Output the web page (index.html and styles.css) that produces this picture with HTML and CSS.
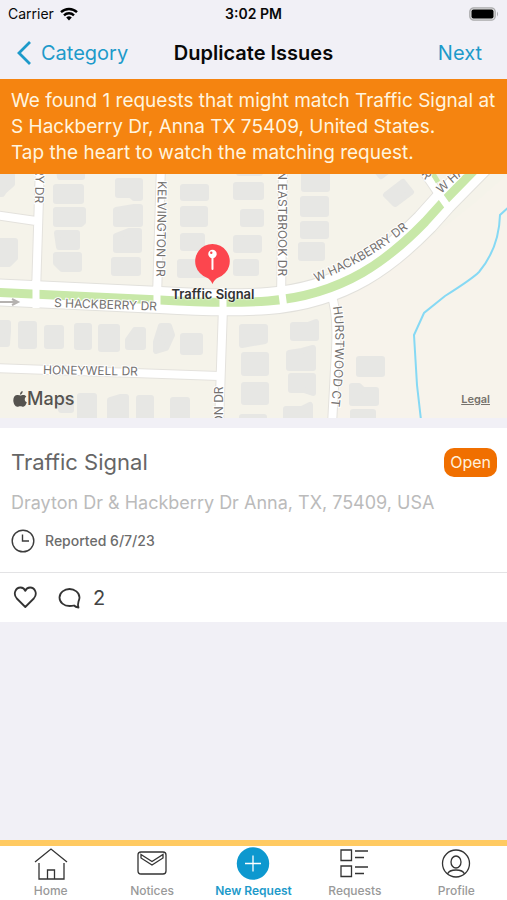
FILE: index.html
```html
<!doctype html>
<html lang="en">
<head>
<meta charset="utf-8" />
<title>Duplicate Issues</title>
<meta name="viewport" content="width=device-width, initial-scale=1" />
<link rel="stylesheet" href="styles.css">
</head>
<body>
  <!-- Status bar -->
  <div class="status">
    <div class="carrier">
      <span>Carrier</span>
      <svg width="18" height="14" viewBox="0 0 18 14" fill="none" stroke="#000" stroke-width="2.4">
        <path d="M1 5.2a11.6 11.6 0 0 1 16 0M4 8.3a7.3 7.3 0 0 1 10 0"/>
        <path d="M9 13.5 6.2 10.6a4 4 0 0 1 5.6 0z" fill="#000" stroke="none"/>
      </svg>
    </div>
    <div class="time">3:02 PM</div>
    <div class="battery">
      <svg width="30" height="14" viewBox="0 0 30 14">
        <rect x=".8" y=".8" width="25.4" height="12.4" rx="4" fill="#dededf" stroke="#aaaaac" stroke-width="1.3"/>
        <rect x="2.5" y="2.4" width="22" height="9.2" rx="2" fill="#000"/>
        <path d="M28 4.5q2 2.5 0 5z" fill="#aaaaac"/>
      </svg>
    </div>
  </div>

  <!-- Navigation -->
  <header class="nav">
    <a class="back" href="#">
      <svg width="14" height="24" viewBox="0 0 14 24" fill="none" stroke="currentColor" stroke-width="2.8"><path d="M13 1 2 12l11 11"/></svg>
      Category
    </a>
    <h1>Duplicate Issues</h1>
    <a class="next" href="#">Next</a>
  </header>

  <p class="banner">We found 1 requests that might match Traffic Signal at S Hackberry Dr, Anna TX 75409, United States.<br>Tap the heart to watch the matching request.</p>

  <!-- Map -->
  <div class="map">
    <svg class="tiles" viewBox="0 174 507 244">
      <defs>
        <path id="main" d="M-10 292 160 300Q225 304 268 301C345 295 390 258 425 222L443 202 500 144"/>
        <path id="side" d="M-5 215 36 221M40 165 36 293M161 165 157 297M283 165 281 299M424 172 443 200M-5 368 219 376M223 307 219 425M331 294Q338 312 336 350L332 425"/>
        <path id="hackberry" d="M316 282Q372 260 412 225"/>
        <path id="hurstwood" d="M333 307Q339 340 330 415"/>
      </defs>
      <path class="land" d="M0 174H507V418H0z"/>
      <path class="land-east" d="M327 418 337 330Q325 298 340 288 420 255 507 174V418z"/>

      <!-- buildings -->
      <g class="houses">
        <path d="M0 175h12v9l-8 7-2 3H0zM0 241h15v17l-6 6H0z"/>
        <path d="M59 170h23v7H60zM56 187h25v14H56zM56 210h27v12l-2 2H56zM57 233h20v14H59zM56 255h23v14H62l-6-6z"/>
        <path d="M118 170h22v1h-22zM118 181h22v17h-6l-3-3h-13zM116 210l18-3h6v17h-24zM116 236l13-5h10v19h-23zM114 260h24v13h-24z"/>
        <path d="M183 187h23v11h-23zM183 209h22v15h-22zM183 236h19v12h-19zM180 262h26v13h-26z"/>
        <path d="M239 170h21v3h-21zM236 185h25v12h-25zM243 212h18v12h-18zM236 238h23v12h-23zM236 262h20v11h-20z"/>
        <path d="M304 170h23v19h-23zM303 199h23v15h-23zM303 224h23v12h-23zM301 245h21v13h-21zM376 170h13l-8 6zM386 195l17-13 8 10-16 12z"/>
        <path d="M0 323h8v8l-1 13H0zM21 324h13v22H21zM47 328h14v18H47zM77 326h12v21H77zM101 327h16v22h-16zM128 340l7-10h8v17h-15zM156 342l5-16h8l3 9-6 13-10 3zM183 336h17v16h-17z"/>
        <path d="M242 327h23v14l-23 4zM244 355h22v18h-22zM244 385h22v17h-22zM242 417h22v3h-22zM293 325h15l8-3v16h-23zM289 353l13-2 11-3v20h-24zM291 376h22v17l-9-3h-13zM286 409h16l8-4v14h-24z"/>
        <path d="M359 359h23v15h-23zM352 386h7l4 4h13v13h-24zM353 412h20v8h-20z"/>
        <path d="M59 399h12v11H61zM80 396h14v24H80zM110 400l10-3h6v22h-16zM139 398h12v22h-12zM173 400h14v18h-14z"/>
      </g>

      <path class="river" d="M510 206 500 215Q499 248 479 272 472 279 445 296L424 313 414 335 417 385 421 420"/>

      <!-- roads -->
      <use href="#side" class="side-edge"/>
      <use href="#main" class="main-edge"/>
      <use href="#side" class="side-fill"/>
      <use href="#main" class="main-fill"/>
      <use href="#main" class="median"/>
      <path class="crossing" d="M36 280v28M157 286v23M223 288v23M281 286 284 309M436 190 451 211"/>
      <path class="median-side" d="M432 172 438 182"/>
      <path class="oneway" d="M0 302H17M12 299 18 302 12 305"/>

      <!-- road names -->
      <g class="roads">
        <text transform="translate(36 145) rotate(91)">BERRY DR</text>
        <text transform="translate(158 181) rotate(91)">KELVINGTON DR</text>
        <text transform="translate(278 171) rotate(90)">N EASTBROOK DR</text>
        <text transform="translate(54 307) rotate(2)">S HACKBERRY DR</text>
        <text transform="translate(43 374) rotate(1)">HONEYWELL DR</text>
        <text transform="translate(223 464) rotate(-90)">DRAYTON DR</text>
        <text transform="translate(441 194) rotate(-42)">W HACKBERRY</text>
        <text transform="translate(421 174) rotate(55)">R</text>
        <text><textPath href="#hackberry">W HACKBERRY DR</textPath></text>
        <text><textPath href="#hurstwood">HURSTWOOD CT</textPath></text>
      </g>
    </svg>
    <div class="pin">
      <svg width="40" height="44" viewBox="0 0 40 44">
        <path d="M20 42Q18 37 14 35.5A17.3 17.3 0 1 1 26 35.5Q22 37 20 42z" fill="#fc464e"/>
        <path d="M20 14v13" stroke="#fff" stroke-width="2" stroke-linecap="round"/>
        <circle cx="20" cy="12" r="4.2" fill="#fff"/>
        <circle cx="18.8" cy="10.8" r="1.2" fill="#fc464e"/>
      </svg>
      <span>Traffic Signal</span>
    </div>
    <div class="brand">
      <svg width="14" height="16" viewBox="0 0 14 16" fill="#55534f">
        <path d="M9.6 0Q10 2.8 7 3.8 6.800 1 9.600 0z"/>
        <path d="M7.2 4.500C8 4.500 9 4 10.500 4 11.700 4 12.700 4.600 13.300 5.500 11 7 11.400 10.300 13.800 11.300 13 14 11.700 15.700 10.300 15.700 9.100 15.700 8.700 15.200 7.300 15.200S5.500 15.700 4.300 15.700C2.200 15.700.3 12.300.3 9.200.3 6 2.200 4.100 4.300 4.100 5.600 4.100 6.400 4.500 7.200 4.500z"/>
      </svg>
      Maps
    </div>
    <a class="legal" href="#">Legal</a>
  </div>

  <!-- Matching request -->
  <article class="card">
    <div class="info">
      <div class="heading">
        <h2>Traffic Signal</h2>
        <span class="badge">Open</span>
      </div>
      <p class="address">Drayton Dr &amp; Hackberry Dr Anna, TX, 75409, USA</p>
      <div class="reported">
        <svg width="24" height="24" viewBox="0 0 24 24" fill="none" stroke="#3c3c3c" stroke-width="1.4"><circle cx="12" cy="12" r="10.8"/><path d="M11.5 5.5V12H18"/></svg>
        <span>Reported 6/7/23</span>
      </div>
    </div>
    <div class="actions">
      <button type="button" aria-label="Watch">
        <svg width="24" height="24" viewBox="0 0 24 24" fill="none" stroke="#333" stroke-width="1.8" stroke-linejoin="round"><path d="M12.3 21 3.800 12.500C-.5 7.500 3 1.500 7.500 1.500 10 1.500 11.600 3 12.300 4.800 13 3 14.600 1.500 17.100 1.500 21.600 1.500 25.100 7.500 20.800 12.500z"/></svg>
      </button>
      <button type="button">
        <svg width="24" height="24" viewBox="0 0 24 24" fill="none" stroke="#333" stroke-width="1.8" stroke-linejoin="round"><path d="M21.500 15.500C22 14 22.500 13 22.500 11.500 22.500 6.500 17.500 3 12.500 3S2.500 6.500 2.500 11.500 7 20 12.500 20Q15 20 17 19.500 18.500 21 21.500 21.500 20.500 19 21.500 15.500z"/></svg>
        <span>2</span>
      </button>
    </div>
  </article>

  <!-- Tabs -->
  <nav class="tabs">
    <a href="#">
      <svg width="34" height="34" viewBox="0 0 34 34" fill="none" stroke="#333" stroke-width="1.3"><path d="M1 16 17 3l16 13M5 17v16h25V17M13.500 33v-9h7v9"/></svg>
      Home
    </a>
    <a href="#">
      <svg width="34" height="34" viewBox="0 0 34 34" fill="none" stroke="#333" stroke-width="1.3"><rect x="3" y="6" width="28" height="22" rx="3"/><path d="M6 8.500 17 15.500 28 8.500V12L17 19 6 12z"/></svg>
      Notices
    </a>
    <a class="active" href="#">
      <svg width="34" height="34" viewBox="0 0 34 34" fill="none" stroke="#fff" stroke-width="1.3"><circle cx="17" cy="17.5" r="16.2" fill="#0d98cf" stroke="none"/><path d="M9 17.500h16M17 9.500v16"/></svg>
      New Request
    </a>
    <a href="#">
      <svg width="34" height="34" viewBox="0 0 34 34" fill="none" stroke="#333" stroke-width="1.3"><path d="M3 4h10.500v10.500H3zM3 20h10.500v10.500H3zM17 5h13M17 11.500h9M17 21h13M17 27.500h9"/></svg>
      Requests
    </a>
    <a href="#">
      <svg width="34" height="34" viewBox="0 0 34 34" fill="none" stroke="#333" stroke-width="1.3"><circle cx="17" cy="17.5" r="13.5"/><ellipse cx="17" cy="16" rx="5" ry="6"/><path d="M8.500 28Q10 24 17 24T25.500 28"/></svg>
      Profile
    </a>
  </nav>
</body>
</html>
```

FILE: styles.css
```css
:root{
  --blue:#1d9aca;
  --bg:#f1f0f6;
  --orange:#f58410;
}

*{margin:0;padding:0;box-sizing:border-box}
body{
  display:flex;flex-direction:column;
  min-height:100vh;background:var(--bg);color:#080808;
  font-family:Inter,"Liberation Sans",sans-serif;
}
svg{display:block;flex:none}
a{color:inherit;text-decoration:none}

/* === Status bar === */
.status{
  display:grid;grid-template-columns:1fr auto 1fr;align-items:center;
  height:27px;padding:0 8px;font-size:14px;
}
.carrier{display:flex;align-items:center;gap:6px}
.time{font-weight:600}
.battery{justify-self:end}

/* === Navigation === */
.nav{
  display:grid;grid-template-columns:1fr auto 1fr;align-items:center;
  height:52px;padding:0 17px;
}
.nav h1{font-size:20px;font-weight:600}
.back,.next{color:var(--blue);font-size:20px}
.back{display:flex;align-items:center;gap:10px}
.next{justify-self:end;padding-right:8px}

.banner{
  padding:9px 11px 8px;background:var(--orange);
  color:#fff4df;font-size:19px;line-height:26px;
}

/* === Map === */
.map{position:relative}
.tiles{width:100%;height:auto}
.tiles path,.tiles use{fill:none}
.tiles .land{fill:#f5f3ea}
.tiles .land-east{fill:#f7f3eb}
.tiles .houses path{fill:#e7e7e4;stroke:#e7e7e4;stroke-width:6;stroke-linejoin:round}
.tiles .river{stroke:#86d9f4;stroke-width:2}
.side-edge{stroke:#e4e2dd;stroke-width:10}
.side-fill{stroke:#fff;stroke-width:8}
.main-edge{stroke:#e2e1dc;stroke-width:28}
.main-fill{stroke:#fff;stroke-width:26}
.median{stroke:#c8e8a8;stroke-width:9}
.median-side{stroke:#c8e8a8;stroke-width:5}
.crossing{stroke:#fff;stroke-width:7}
.oneway{stroke:#b5b2b0;stroke-width:2}
.roads{
  fill:#74716f;font-size:12px;
  stroke:#fff;stroke-width:2;paint-order:stroke;
}
.pin{
  position:absolute;left:42%;top:68px;transform:translateX(-50%);
  display:flex;flex-direction:column;align-items:center;
  font-size:13px;line-height:16px;font-weight:600;color:#333;white-space:nowrap;
  text-shadow:0 0 2px #fff,0 0 2px #fff;
}
.brand{
  position:absolute;left:13px;bottom:7px;
  display:flex;align-items:center;
  color:#55534f;font-size:18px;line-height:24px;font-weight:500;
}
.legal{
  position:absolute;right:17px;bottom:11px;
  color:#77736d;font-size:11px;line-height:16px;font-weight:600;text-decoration:underline;
}

/* === Request card === */
.card{margin-top:10px;background:#fff}
.info{padding:19px 10px 18px 11px}
.heading{display:flex;justify-content:space-between;align-items:center}
.heading h2{color:#666;font-size:22px;line-height:30px;font-weight:400}
.badge{
  padding:0 6px;border-radius:10px;background:#f06f00;
  color:#fff0dc;font-size:16px;line-height:29px;
}
.address{margin-top:13px;color:#bbb;font-size:18px;line-height:26px}
.reported{
  display:flex;align-items:center;gap:10px;margin-top:12px;
  color:#6c6c6c;font-size:14px;line-height:26px;font-weight:500;
}
.actions{
  display:flex;align-items:center;gap:20px;
  height:50px;padding:0 13px;border-top:1px solid #e3e3e5;
}
.actions button{
  display:flex;align-items:center;gap:12px;
  border:0;background:none;color:#444;font:20px/24px Inter,"Liberation Sans",sans-serif;
}

/* === Tab bar === */
.tabs{
  display:grid;grid-template-columns:repeat(5,1fr);
  height:60px;margin-top:auto;
  background:#fff;border-top:6px solid #ffca62;
}
.tabs a{
  display:flex;flex-direction:column;align-items:center;gap:3px;
  color:#999;font-size:12px;line-height:16px;font-weight:500;
}
.tabs .active{color:var(--blue);font-weight:600}
```
